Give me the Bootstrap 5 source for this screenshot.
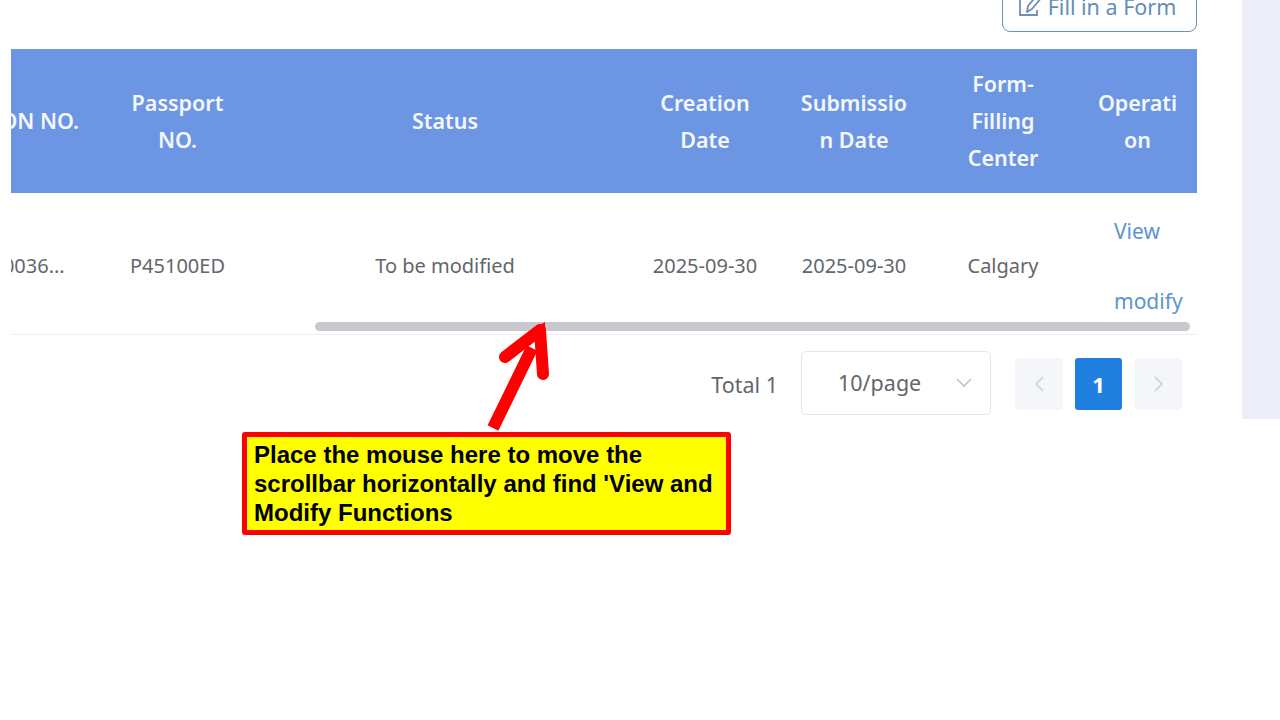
<!DOCTYPE html>
<html lang="en">
<head>
    <meta charset="UTF-8">
    <meta name="viewport" content="width=device-width, initial-scale=1.0">
    <title>Application List</title>
    <link href="https://cdn.jsdelivr.net/npm/bootstrap@5.3.2/dist/css/bootstrap.min.css" rel="stylesheet">
    <style>
        body {
            background: #fff;
            font-family: "Noto Sans", "Open Sans", sans-serif;
            color: #63666b;
            height: 720px;
            overflow: hidden;
        }
        .main-area {
            width: 1197px;
        }
        .side-panel {
            width: 38px;
            height: 419px;
            margin-left: 45px;
            background: #eceef9;
        }
        .top-bar {
            height: 49px;
            padding-bottom: 17px;
            align-items: flex-end;
        }
        .form-btn {
            width: 195px;
            height: 48px;
            border: 1.5px solid #6f8fb3;
            border-radius: 8px;
            background: #fff;
            color: #5f8fb8;
            font-size: 21.5px;
            line-height: 1;
            padding: 0 5px 14px 0;
        }
        .form-btn:hover {
            background: #fff;
            color: #5f8fb8;
            border-color: #6f8fb3;
        }
        .table-clip {
            margin-left: 11px;
            width: 1186px;
            height: 286px;
            overflow: hidden;
            border-bottom: 1px solid #ebeef5;
        }
        .apply-table {
            width: 1299px;
            max-width: none;
            margin: 0 0 0 -113px;
            table-layout: fixed;
        }
        .apply-table th {
            height: 144px;
            padding: 0 0 1px;
            background: #6c96e4;
            color: #f4f7fd;
            font-size: 21.5px;
            font-weight: 600;
            line-height: 37px;
            text-align: center;
            vertical-align: middle;
            border: 0;
        }
        .apply-table td {
            height: 141px;
            padding: 5px 0 0;
            color: #63666b;
            font-size: 20px;
            text-align: center;
            vertical-align: middle;
            border: 0;
        }
        .no-head-text {
            padding-right: 26px;
            white-space: nowrap;
        }
        .apply-table td.no-cell {
            padding-right: 4px;
        }
        .apply-table th.op-head {
            padding-left: 10px;
        }
        .row-link {
            display: block;
            color: #5d94cf;
            font-size: 21px;
            line-height: 30px;
            text-decoration: none;
        }
        .row-link + .row-link {
            margin-top: 40px;
        }
        .apply-table td.link-cell {
            padding: 4px 0 0 46px;
            text-align: left;
        }
        .pager-bar {
            padding: 16px 15px 0 0;
            gap: 24px;
            font-size: 21.5px;
        }
        .per-page {
            width: 190px;
            height: 64px;
            padding: 0 18px 0 36px;
            border: 1.5px solid #e4e6eb;
            border-radius: 5px;
        }
        .total-text {
            margin: 18px -1px 0 0;
        }
        .pager-list {
            gap: 12px;
            margin: 7px 0 0;
        }
        .pager-list .page-item .page-link {
            width: 48px;
            height: 52px;
            margin-left: 0;
            padding: 0;
            border: 0;
            border-radius: 3px;
            background: #f5f6f9;
            color: #b8bcc4;
            font-size: 22px;
        }
        .pager-list .page-item.active .page-link {
            width: 47px;
            background: #1f80df;
            color: #fff;
            font-weight: 700;
        }
        .note-box {
            position: absolute;
            left: 242px;
            top: 432px;
            width: 489px;
            height: 103px;
            padding: 3px 7px;
            background: #ff0;
            border: 5px solid #f00;
            border-radius: 3px;
            color: #000;
            font-family: "Liberation Sans", Arial, sans-serif;
            font-size: 24px;
            font-weight: 700;
            line-height: 29px;
        }
        .scroll-thumb {
            position: absolute;
            left: 315px;
            top: 322px;
            width: 875px;
            height: 9px;
            border-radius: 5px;
            background: #c8c8d0;
        }
        .note-arrow {
            position: absolute;
            left: 480px;
            top: 315px;
        }
    </style>
</head>
<body>
    <div class="d-flex align-items-start">
        <div class="main-area">
            <div class="top-bar d-flex justify-content-end">
                <button class="btn form-btn d-flex align-items-end justify-content-center gap-1" type="button">
                    <svg width="26" height="24" viewBox="0 0 26 24" fill="none" stroke="#6f8fb3" stroke-width="1.8">
                        <path d="M12 4H2v18h17v-5"/>
                        <path d="M9 19l1-6L20 1l4 3-10 12z" stroke-linejoin="round"/>
                    </svg>
                    <span>Fill in a Form</span>
                </button>
            </div>
            <div class="table-clip">
                <table class="table apply-table">
                    <colgroup>
                        <col style="width: 207px">
                        <col style="width: 145px">
                        <col style="width: 390px">
                        <col style="width: 130px">
                        <col style="width: 168px">
                        <col style="width: 130px">
                        <col style="width: 129px">
                    </colgroup>
                    <thead>
                        <tr>
                            <th><div class="no-head-text d-flex justify-content-end">APPLICATION NO.</div></th>
                            <th>Passport<br>NO.</th>
                            <th>Status</th>
                            <th>Creation<br>Date</th>
                            <th>Submissio<br>n Date</th>
                            <th>Form-<br>Filling<br>Center</th>
                            <th class="op-head">Operati<br>on</th>
                        </tr>
                    </thead>
                    <tbody>
                        <tr>
                            <td class="no-cell">2509300036...</td>
                            <td>P45100ED</td>
                            <td>To be modified</td>
                            <td>2025-09-30</td>
                            <td>2025-09-30</td>
                            <td>Calgary</td>
                            <td class="link-cell">
                                <a class="row-link" href="#">View</a>
                                <a class="row-link" href="#">modify</a>
                            </td>
                        </tr>
                    </tbody>
                </table>
            </div>
            <div class="pager-bar d-flex justify-content-end align-items-start">
                <span class="total-text">Total 1</span>
                <div class="per-page d-flex align-items-center justify-content-between">
                    <span>10/page</span>
                    <svg width="16" height="10" viewBox="0 0 16 10" fill="none" stroke="#c0c4cc" stroke-width="1.6">
                        <path d="M1 1l7 7 7-7"/>
                    </svg>
                </div>
                <ul class="pagination pager-list d-flex">
                    <li class="page-item">
                        <a class="page-link d-flex align-items-center justify-content-center" href="#">
                            <svg width="9" height="16" viewBox="0 0 9 16" fill="none" stroke="#c8ccd3" stroke-width="1.5"><path d="M8 1L1 8l7 7"/></svg>
                        </a>
                    </li>
                    <li class="page-item active">
                        <a class="page-link d-flex align-items-center justify-content-center" href="#">1</a>
                    </li>
                    <li class="page-item">
                        <a class="page-link d-flex align-items-center justify-content-center" href="#">
                            <svg width="9" height="16" viewBox="0 0 9 16" fill="none" stroke="#c8ccd3" stroke-width="1.5"><path d="M1 1l7 7-7 7"/></svg>
                        </a>
                    </li>
                </ul>
            </div>
        </div>
        <div class="side-panel"></div>
    </div>

    <!-- annotation laid over the screenshot -->
    <div class="scroll-thumb"></div>
    <svg class="note-arrow" width="80" height="120" viewBox="0 0 80 120" fill="none">
        <path d="M13 113L52 33" stroke="#f00" stroke-width="12"/>
        <path d="M25 42L60 15M63 59L60 16" stroke="#f00" stroke-width="12" stroke-linecap="round"/>
        <path d="M65 7L50 16l16 14z" fill="#f00"/>
    </svg>
    <div class="note-box">Place the mouse here to move the scrollbar horizontally and find 'View and Modify Functions</div>

    <script src="https://cdn.jsdelivr.net/npm/bootstrap@5.3.2/dist/js/bootstrap.bundle.min.js"></script>
</body>
</html>
